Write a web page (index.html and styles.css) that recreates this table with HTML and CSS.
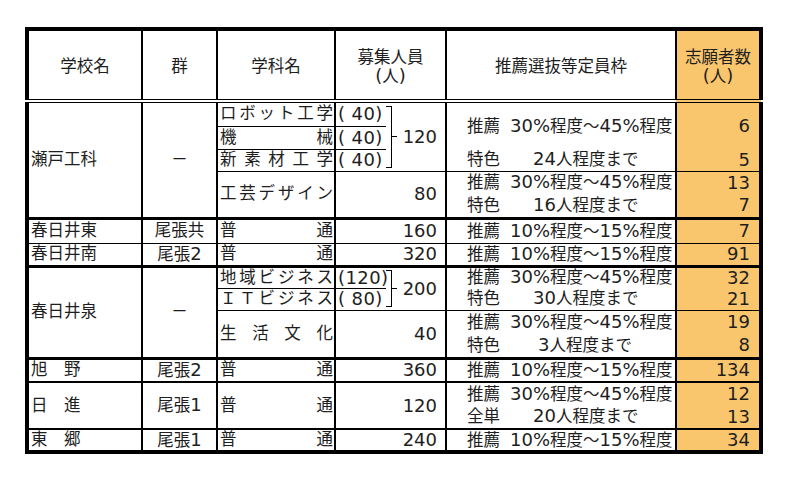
FILE: index.html
```html
<!DOCTYPE html>
<html lang="ja">
<head>
<meta charset="utf-8">
<title>志願者数</title>
<link rel="stylesheet" href="styles.css">
</head>
<body>
<table class="t">
  <colgroup>
    <col class="c-school"><col class="c-group"><col class="c-dept"><col class="c-sub"><col class="c-cap"><col class="c-sel"><col class="c-app">
  </colgroup>
  <thead>
    <tr class="hd">
      <th>学校名</th>
      <th>群</th>
      <th>学科名</th>
      <th colspan="2">募集人員<br><span class="d">(</span>人<span class="d">)</span></th>
      <th>推薦選抜等定員枠</th>
      <th class="app">志願者数<br><span class="d">(</span>人<span class="d">)</span></th>
    </tr>
  </thead>
  <tbody>
    <tr class="r1">
      <td rowspan="5" class="school bb3">瀬戸工科</td>
      <td rowspan="5" class="group bb3">－</td>
      <td class="dept bb1">ロボット工学</td>
      <td class="sub bb1">(&nbsp;40)</td>
      <td rowspan="3" class="cap bb1"><div class="brk"><span class="bracket b3"></span><span class="tick"></span><span class="n">120</span></div></td>
      <td rowspan="2" class="sel"><span class="lbl">推薦</span><span class="d">30%</span>程度～<span class="d">45%</span>程度</td>
      <td rowspan="2" class="app">6</td>
    </tr>
    <tr class="r2">
      <td class="dept bb1">機械</td>
      <td class="sub bb1">(&nbsp;40)</td>
    </tr>
    <tr class="r3">
      <td class="dept bb1">新素材工学</td>
      <td class="sub bb1">(&nbsp;40)</td>
      <td class="sel bb1"><span class="lbl">特色</span><span class="q"><span class="d">24</span>人程度まで</span></td>
      <td class="app bb1">5</td>
    </tr>
    <tr class="r4">
      <td rowspan="2" class="dept bb3">工芸デザイン</td>
      <td rowspan="2" colspan="2" class="num bb3">80</td>
      <td class="sel"><span class="lbl">推薦</span><span class="d">30%</span>程度～<span class="d">45%</span>程度</td>
      <td class="app">13</td>
    </tr>
    <tr class="r5">
      <td class="sel bb3"><span class="lbl">特色</span><span class="q"><span class="d">16</span>人程度まで</span></td>
      <td class="app bb3">7</td>
    </tr>
    <tr class="r6 row1">
      <td class="school">春日井東</td>
      <td class="group">尾張共</td>
      <td class="dept">普通</td>
      <td colspan="2" class="num">160</td>
      <td class="sel"><span class="lbl">推薦</span><span class="d">10%</span>程度～<span class="d">15%</span>程度</td>
      <td class="app">7</td>
    </tr>
    <tr class="r7 row3">
      <td class="school">春日井南</td>
      <td class="group">尾張<span class="d">2</span></td>
      <td class="dept">普通</td>
      <td colspan="2" class="num">320</td>
      <td class="sel"><span class="lbl">推薦</span><span class="d">10%</span>程度～<span class="d">15%</span>程度</td>
      <td class="app">91</td>
    </tr>
    <tr class="r8">
      <td rowspan="4" class="school bb3">春日井泉</td>
      <td rowspan="4" class="group bb3">－</td>
      <td class="dept bb1">地域ビジネス</td>
      <td class="sub bb1">(120)</td>
      <td rowspan="2" class="cap bb1"><div class="brk"><span class="bracket b2"></span><span class="tick"></span><span class="n">200</span></div></td>
      <td class="sel"><span class="lbl">推薦</span><span class="d">30%</span>程度～<span class="d">45%</span>程度</td>
      <td class="app">32</td>
    </tr>
    <tr class="r9">
      <td class="dept bb1">ＩＴビジネス</td>
      <td class="sub bb1">(&nbsp;80)</td>
      <td class="sel bb1"><span class="lbl">特色</span><span class="q"><span class="d">30</span>人程度まで</span></td>
      <td class="app bb1">21</td>
    </tr>
    <tr class="r10">
      <td rowspan="2" class="dept bb3">生活文化</td>
      <td rowspan="2" colspan="2" class="num bb3">40</td>
      <td class="sel"><span class="lbl">推薦</span><span class="d">30%</span>程度～<span class="d">45%</span>程度</td>
      <td class="app">19</td>
    </tr>
    <tr class="r11">
      <td class="sel bb3"><span class="lbl">特色</span><span class="q q1"><span class="d">3</span>人程度まで</span></td>
      <td class="app bb3">8</td>
    </tr>
    <tr class="r12 row2">
      <td class="school">旭　野</td>
      <td class="group">尾張<span class="d">2</span></td>
      <td class="dept">普通</td>
      <td colspan="2" class="num">360</td>
      <td class="sel"><span class="lbl">推薦</span><span class="d">10%</span>程度～<span class="d">15%</span>程度</td>
      <td class="app">134</td>
    </tr>
    <tr class="r13">
      <td rowspan="2" class="school bb2">日　進</td>
      <td rowspan="2" class="group bb2">尾張<span class="d">1</span></td>
      <td rowspan="2" class="dept bb2">普通</td>
      <td rowspan="2" colspan="2" class="num bb2">120</td>
      <td class="sel"><span class="lbl">推薦</span><span class="d">30%</span>程度～<span class="d">45%</span>程度</td>
      <td class="app">12</td>
    </tr>
    <tr class="r14">
      <td class="sel bb2"><span class="lbl">全単</span><span class="q"><span class="d">20</span>人程度まで</span></td>
      <td class="app bb2">13</td>
    </tr>
    <tr class="r15">
      <td class="school">東　郷</td>
      <td class="group">尾張<span class="d">1</span></td>
      <td class="dept">普通</td>
      <td colspan="2" class="num">240</td>
      <td class="sel"><span class="lbl">推薦</span><span class="d">10%</span>程度～<span class="d">15%</span>程度</td>
      <td class="app">34</td>
    </tr>
  </tbody>
</table>
</body>
</html>
```

FILE: styles.css
```css
html, body {
  margin: 0;
  padding: 0;
  background: #fff;
}

body {
  padding: 27px 0 0 25px;
}

.t {
  border-collapse: collapse;
  table-layout: fixed;
  width: 738px;
  border: 4px solid #000;
  font-family: "DejaVu Sans", "Noto Sans CJK JP", sans-serif;
  font-size: 16.5px;
  line-height: 18px;
  color: #1e1e1e;
}

.c-school { width: 115px; }
.c-group { width: 75px; }
.c-dept { width: 118px; }
.c-sub { width: 51px; }
.c-cap { width: 60px; }
.c-sel { width: 230px; }
.c-app { width: 85px; }

th, td {
  padding: 0;
  border-left: 2px solid #000;
  border-right: 2px solid #000;
  border-top: 0 none;
  border-bottom: 0 none;
  vertical-align: middle;
  white-space: nowrap;
  overflow: visible;
}

th {
  font-weight: normal;
  text-align: center;
  border-bottom: 4px double #000;
  padding-top: 4px;
}

.d {
  font-size: 18px;
  line-height: 18px;
}

.hd { height: 72px; }
.r1 { height: 25px; }
.r2 { height: 23px; }
.r3 { height: 22px; }
.r4 { height: 23px; }
.r5 { height: 24px; }
.r6 { height: 25px; }
.r7 { height: 23px; }
.r8 { height: 22px; }
.r9 { height: 22px; }
.r10 { height: 24px; }
.r11 { height: 24px; }
.r12 { height: 24px; }
.r13 { height: 23px; }
.r14 { height: 24px; }
.r15 { height: 23px; }

.bb1 { border-bottom: 1px solid #000; }
.bb2 { border-bottom: 2px solid #000; }
.bb3 { border-bottom: 3px solid #000; }
.row1 > td { border-bottom: 1px solid #000; }
.row2 > td { border-bottom: 2px solid #000; }
.row3 > td { border-bottom: 3px solid #000; }

.school {
  text-align: left;
  padding-left: 2px;
}

.group {
  text-align: center;
}

.dept {
  text-align: justify;
  text-align-last: justify;
  padding: 0 1px 0 2px;
}

.sub {
  border-right: 0 none;
  padding-left: 2px;
  font-size: 18px;
  letter-spacing: 0.4px;
}

.cap {
  border-left: 0 none;
}

.brk {
  display: flex;
  align-items: center;
}

.bracket {
  width: 6px;
  border: 1px solid #000;
  border-left: 0 none;
  box-sizing: border-box;
}

.b3 { height: 62px; }
.b2 { height: 37px; }

.tick {
  width: 5px;
  height: 1px;
  background: #000;
}

.n {
  margin-left: auto;
  padding-right: 8px;
  font-size: 18px;
}

.num {
  text-align: right;
  padding-right: 8px;
  font-size: 18px;
}

.sel {
  padding-left: 20px;
}

.lbl {
  display: inline-block;
  width: 43px;
}

.q {
  display: inline-block;
  padding-left: 23px;
}

.q1 {
  padding-left: 28px;
}

.app {
  background: #f9c66e;
  text-align: right;
  padding-right: 9px;
  font-size: 18px;
}

th.app {
  text-align: center;
  padding-right: 0;
  font-size: 16.5px;
}
```
